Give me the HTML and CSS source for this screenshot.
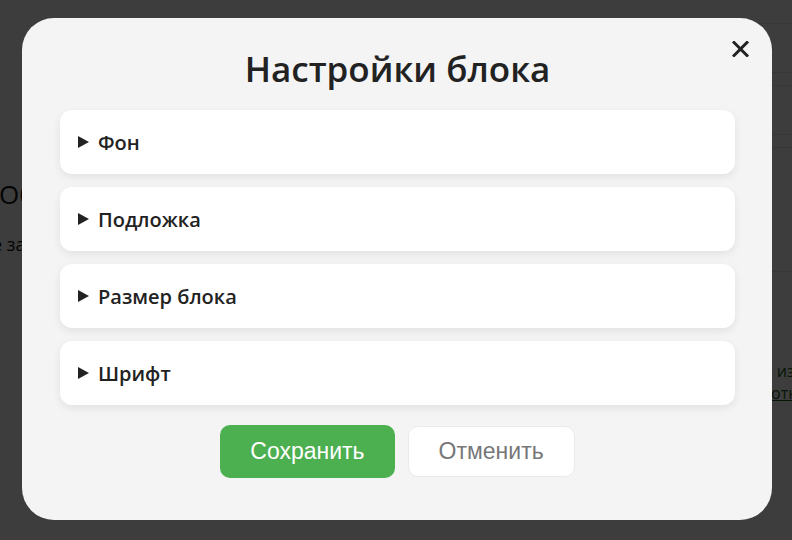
FILE: index.html
```html
<!DOCTYPE html>
<html lang="ru">
<head>
<meta charset="utf-8">
<title>Настройки блока</title>
<link rel="stylesheet" href="styles.css">
</head>
<body>
<div class="page">
  <div class="page-left">
    <div class="page-heading">Обл</div>
    <div class="page-note">е за</div>
  </div>
  <div class="page-main"></div>
  <div class="page-right">
    <div class="field"></div>
    <div class="field"></div>
    <div class="field field-tall"></div>
    <p class="page-text">Сохраните из</p>
    <a class="page-link" href="#">откуда</a>
  </div>
</div>

<div class="overlay">
  <div class="modal">
    <button class="close" aria-label="Закрыть">
      <svg width="17" height="16" viewBox="0 0 17 16"><path d="M2 1.5 L15 14.5 M15 1.5 L2 14.5" stroke="#222" stroke-width="3" stroke-linecap="square" fill="none"/></svg>
    </button>
    <h1 class="title">Настройки блока</h1>
    <div class="sections">
      <details class="section"><summary>Фон</summary></details>
      <details class="section"><summary>Подложка</summary></details>
      <details class="section"><summary>Размер блока</summary></details>
      <details class="section"><summary>Шрифт</summary></details>
    </div>
    <div class="actions">
      <button class="btn btn-save">Сохранить</button>
      <button class="btn btn-cancel">Отменить</button>
    </div>
  </div>
</div>
</body>
</html>
```

FILE: styles.css
```css
html, body {
  margin: 0;
  padding: 0;
  height: 100%;
}
body {
  background: #ffffff;
  font-family: "Open Sans", "Liberation Sans", sans-serif;
  overflow: hidden;
}
.page {
  display: flex;
  height: 540px;
}
.page-left {
  width: 22px;
  overflow: hidden;
  padding-top: 176px;
}
.page-heading {
  font-size: 26px;
  color: #111;
  white-space: nowrap;
  margin-left: -1px;
  line-height: 36px;
}
.page-note {
  font-size: 18px;
  color: #111;
  white-space: nowrap;
  margin-left: -8px;
  margin-top: 20px;
}
.page-main {
  flex: 1;
}
.page-right {
  width: 60px;
  overflow: hidden;
  padding-top: 23px;
}
.field {
  height: 48px;
  border: 1px solid #e4e4e4;
  margin-right: -4px;
  margin-bottom: 12px;
}
.field-tall {
  height: 123px;
}
.page-text {
  margin: 88px 0 0 -43px;
  font-size: 16px;
  color: #1b5e20;
  white-space: nowrap;
}
.page-link {
  display: block;
  margin-left: 39px;
  font-size: 16px;
  color: #1b5e20;
  white-space: nowrap;
}

.overlay {
  position: fixed;
  inset: 0;
  background: rgba(0, 0, 0, 0.76);
}
.modal {
  position: absolute;
  left: 22px;
  top: 18px;
  width: 750px;
  height: 502px;
  box-sizing: border-box;
  background: #f4f4f4;
  border-radius: 32px;
  padding: 26px 37px 0 38px;
  display: flex;
  flex-direction: column;
}
.close {
  position: absolute;
  top: 23px;
  right: 23px;
  width: 17px;
  height: 16px;
  padding: 0;
  border: 0;
  background: none;
  display: block;
  cursor: pointer;
}
.close svg {
  display: block;
}
.title {
  margin: 0 0 17px;
  text-align: center;
  font-size: 35px;
  font-weight: 600;
  color: #222;
  line-height: 49px;
}
.sections {
  display: flex;
  flex-direction: column;
  gap: 13px;
}
.section {
  background: #fff;
  border-radius: 12px;
  box-shadow: 0 3px 8px rgba(0, 0, 0, 0.08);
}
.section summary {
  list-style: none;
  display: flex;
  align-items: center;
  gap: 9px;
  height: 64px;
  padding: 0 18px;
  font-size: 20px;
  font-weight: 600;
  color: #222;
  cursor: pointer;
}
.section summary::-webkit-details-marker {
  display: none;
}
.section summary::before {
  content: "";
  width: 0;
  height: 0;
  border-left: 11px solid #222;
  border-top: 6px solid transparent;
  border-bottom: 6px solid transparent;
}
.actions {
  display: flex;
  justify-content: center;
  align-items: center;
  gap: 13px;
  margin-top: 20px;
}
.btn {
  font-family: "Liberation Sans", Arial, sans-serif;
  font-size: 23px;
  border-radius: 10px;
  cursor: pointer;
}
.btn-save {
  height: 53px;
  padding: 0 30px;
  background: #4caf50;
  color: #fff;
  border: 0;
}
.btn-cancel {
  height: 51px;
  padding: 0 30px;
  background: #fff;
  color: #777;
  border: 1px solid #eaeaea;
}
```
